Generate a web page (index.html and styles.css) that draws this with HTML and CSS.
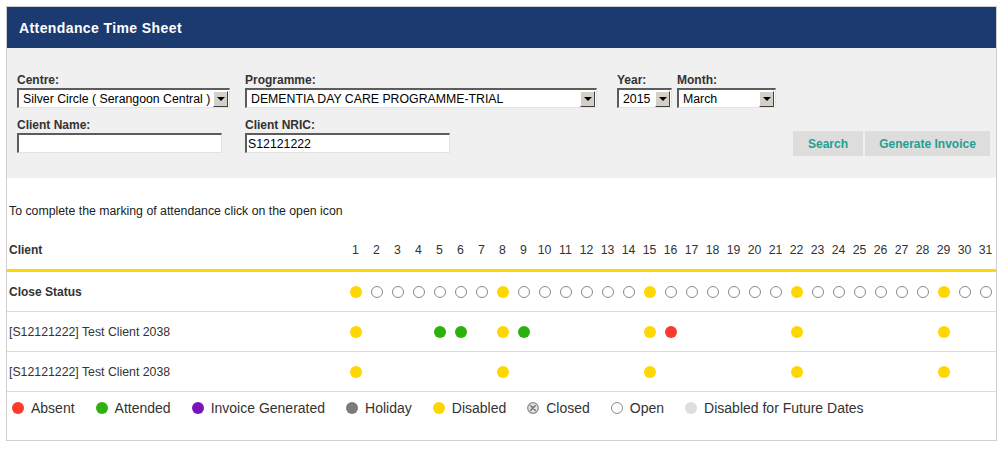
FILE: index.html
```html
<!DOCTYPE html>
<html>
<head>
<meta charset="utf-8">
<title>Attendance Time Sheet</title>
<link rel="stylesheet" href="styles.css">
</head>
<body>
<div class="sheet">
  <div class="title">Attendance Time Sheet</div>
  <div class="filters">
    <div class="frow">
      <div class="field f-centre">
        <label>Centre:</label>
        <div class="select"><span class="val">Silver Circle ( Serangoon Central )</span><span class="btn"><i class="tri"></i></span></div>
      </div>
      <div class="field f-prog">
        <label>Programme:</label>
        <div class="select"><span class="val">DEMENTIA DAY CARE PROGRAMME-TRIAL</span><span class="btn"><i class="tri"></i></span></div>
      </div>
      <div class="field f-year">
        <label>Year:</label>
        <div class="select"><span class="val">2015</span><span class="btn"><i class="tri"></i></span></div>
      </div>
      <div class="field f-month">
        <label>Month:</label>
        <div class="select"><span class="val">March</span><span class="btn"><i class="tri"></i></span></div>
      </div>
    </div>
    <div class="frow">
      <div class="field f-name">
        <label>Client Name:</label>
        <div class="input"></div>
      </div>
      <div class="field f-nric">
        <label>Client NRIC:</label>
        <div class="input">S12121222</div>
      </div>
      <div class="actions">
        <button class="b-search">Search</button>
        <button class="b-invoice">Generate Invoice</button>
      </div>
    </div>
  </div>
  <div class="board">
    <div class="hint">To complete the marking of attendance click on the open icon</div>
    <div class="row head">
      <div class="cl">Client</div>
      <div class="d">1</div><div class="d">2</div><div class="d">3</div><div class="d">4</div><div class="d">5</div><div class="d">6</div><div class="d">7</div><div class="d">8</div><div class="d">9</div><div class="d">10</div><div class="d">11</div><div class="d">12</div><div class="d">13</div><div class="d">14</div><div class="d">15</div><div class="d">16</div><div class="d">17</div><div class="d">18</div><div class="d">19</div><div class="d">20</div><div class="d">21</div><div class="d">22</div><div class="d">23</div><div class="d">24</div><div class="d">25</div><div class="d">26</div><div class="d">27</div><div class="d">28</div><div class="d">29</div><div class="d">30</div><div class="d">31</div>
    </div>
    <div class="row">
      <div class="cl bold">Close Status</div>
      <div class="d"><span class="dot y"></span></div>
      <div class="d"><span class="dot o"></span></div>
      <div class="d"><span class="dot o"></span></div>
      <div class="d"><span class="dot o"></span></div>
      <div class="d"><span class="dot o"></span></div>
      <div class="d"><span class="dot o"></span></div>
      <div class="d"><span class="dot o"></span></div>
      <div class="d"><span class="dot y"></span></div>
      <div class="d"><span class="dot o"></span></div>
      <div class="d"><span class="dot o"></span></div>
      <div class="d"><span class="dot o"></span></div>
      <div class="d"><span class="dot o"></span></div>
      <div class="d"><span class="dot o"></span></div>
      <div class="d"><span class="dot o"></span></div>
      <div class="d"><span class="dot y"></span></div>
      <div class="d"><span class="dot o"></span></div>
      <div class="d"><span class="dot o"></span></div>
      <div class="d"><span class="dot o"></span></div>
      <div class="d"><span class="dot o"></span></div>
      <div class="d"><span class="dot o"></span></div>
      <div class="d"><span class="dot o"></span></div>
      <div class="d"><span class="dot y"></span></div>
      <div class="d"><span class="dot o"></span></div>
      <div class="d"><span class="dot o"></span></div>
      <div class="d"><span class="dot o"></span></div>
      <div class="d"><span class="dot o"></span></div>
      <div class="d"><span class="dot o"></span></div>
      <div class="d"><span class="dot o"></span></div>
      <div class="d"><span class="dot y"></span></div>
      <div class="d"><span class="dot o"></span></div>
      <div class="d"><span class="dot o"></span></div>
    </div>
    <div class="row">
      <div class="cl">[S12121222] Test Client 2038</div>
      <div class="d"><span class="dot y"></span></div>
      <div class="d"></div>
      <div class="d"></div>
      <div class="d"></div>
      <div class="d"><span class="dot g"></span></div>
      <div class="d"><span class="dot g"></span></div>
      <div class="d"></div>
      <div class="d"><span class="dot y"></span></div>
      <div class="d"><span class="dot g"></span></div>
      <div class="d"></div>
      <div class="d"></div>
      <div class="d"></div>
      <div class="d"></div>
      <div class="d"></div>
      <div class="d"><span class="dot y"></span></div>
      <div class="d"><span class="dot r"></span></div>
      <div class="d"></div>
      <div class="d"></div>
      <div class="d"></div>
      <div class="d"></div>
      <div class="d"></div>
      <div class="d"><span class="dot y"></span></div>
      <div class="d"></div>
      <div class="d"></div>
      <div class="d"></div>
      <div class="d"></div>
      <div class="d"></div>
      <div class="d"></div>
      <div class="d"><span class="dot y"></span></div>
      <div class="d"></div>
      <div class="d"></div>
    </div>
    <div class="row">
      <div class="cl">[S12121222] Test Client 2038</div>
      <div class="d"><span class="dot y"></span></div>
      <div class="d"></div>
      <div class="d"></div>
      <div class="d"></div>
      <div class="d"></div>
      <div class="d"></div>
      <div class="d"></div>
      <div class="d"><span class="dot y"></span></div>
      <div class="d"></div>
      <div class="d"></div>
      <div class="d"></div>
      <div class="d"></div>
      <div class="d"></div>
      <div class="d"></div>
      <div class="d"><span class="dot y"></span></div>
      <div class="d"></div>
      <div class="d"></div>
      <div class="d"></div>
      <div class="d"></div>
      <div class="d"></div>
      <div class="d"></div>
      <div class="d"><span class="dot y"></span></div>
      <div class="d"></div>
      <div class="d"></div>
      <div class="d"></div>
      <div class="d"></div>
      <div class="d"></div>
      <div class="d"></div>
      <div class="d"><span class="dot y"></span></div>
      <div class="d"></div>
      <div class="d"></div>
    </div>
    <div class="legend">
      <span class="li"><span class="dot r"></span>Absent</span>
      <span class="li"><span class="dot g"></span>Attended</span>
      <span class="li"><span class="dot p"></span>Invoice Generated</span>
      <span class="li"><span class="dot h"></span>Holiday</span>
      <span class="li"><span class="dot y"></span>Disabled</span>
      <span class="li"><svg class="ico" width="12" height="12" viewBox="0 0 12 12"><circle cx="6" cy="6" r="5.3" fill="#e2e2e2" stroke="#8a8a8a" stroke-width="1.2"/><path d="M3.8 3.8 L8.2 8.2 M8.2 3.8 L3.8 8.2" stroke="#6e6e6e" stroke-width="1.5" stroke-linecap="round"/></svg>Closed</span>
      <span class="li"><span class="dot ol"></span>Open</span>
      <span class="li"><span class="dot f"></span>Disabled for Future Dates</span>
    </div>
  </div>
</div>
</body>
</html>
```

FILE: styles.css
```css
* {
  box-sizing: border-box;
}

body {
  margin: 0;
  background: #fff;
  font-family: "Liberation Sans", Arial, sans-serif;
  color: #333;
}

.sheet {
  margin: 6px;
  width: 991px;
  border: 1px solid #cfcfcf;
}

.title {
  height: 41px;
  background: #1b3a6f;
  color: #fff;
  font-size: 14px;
  font-weight: bold;
  letter-spacing: 0.4px;
  padding-left: 12px;
  display: flex;
  align-items: center;
}

.filters {
  background: #f0f0f0;
  height: 130px;
  padding: 25px 6px 0 10px;
}

.frow {
  display: flex;
}

.frow + .frow {
  margin-top: 10px;
}

.field label {
  display: block;
  font-size: 12px;
  font-weight: bold;
  line-height: 15px;
  color: #333;
}

.f-centre { width: 213px; margin-right: 15px; }
.f-prog { width: 352px; margin-right: 20px; }
.f-year { width: 55px; margin-right: 5px; }
.f-month { width: 99px; }
.f-name { width: 213px; margin-right: 15px; }
.f-nric { width: 352px; }

.select,
.input {
  height: 20px;
  background: #fff;
  border-style: solid;
  border-width: 2px 1px 1px 2px;
  border-color: #5c5c5c #e2e2e2 #e2e2e2 #5c5c5c;
  font-size: 12.3px;
  color: #000;
  display: flex;
  align-items: center;
}

.select {
  padding-left: 4px;
}

.input {
  width: 205px;
  padding-left: 1px;
}

.select .val {
  flex: 1;
  white-space: nowrap;
  overflow: hidden;
}

.select .btn {
  width: 15px;
  height: 16px;
  margin-right: 1px;
  background: #d4d0c8;
  border: 1px solid;
  border-color: #fff #404040 #404040 #fff;
  display: flex;
  align-items: center;
  justify-content: center;
}

.tri {
  width: 0;
  height: 0;
  border-left: 4px solid transparent;
  border-right: 4px solid transparent;
  border-top: 4px solid #000;
  margin-top: 1px;
}

.actions {
  margin-left: auto;
  margin-top: 13px;
  display: flex;
  gap: 2px;
}

.actions button {
  height: 25px;
  border: none;
  background: #dddddd;
  color: #1fa090;
  font-family: "Liberation Sans", Arial, sans-serif;
  font-size: 12px;
  font-weight: bold;
  padding: 0;
}

.b-search { width: 70px; }
.b-invoice { width: 125px; }

.board {
  padding-top: 25px;
}

.hint {
  font-size: 12.3px;
  line-height: 16px;
  padding-left: 2px;
  margin-bottom: 10px;
  color: #222;
}

.row {
  display: grid;
  grid-template-columns: 338px repeat(31, 21px);
  align-items: center;
  height: 40px;
  border-bottom: 1px solid #dcdcdc;
  font-size: 12.3px;
  color: #333;
}

.row.head {
  height: 43px;
  padding-top: 1px;
  border-bottom: 3px solid #ffd700;
}

.cl {
  padding-left: 2px;
}

.head .cl,
.bold {
  font-weight: bold;
  font-size: 12px;
}

.d {
  display: flex;
  justify-content: center;
}

.dot {
  display: inline-block;
  width: 12px;
  height: 12px;
  border-radius: 50%;
  flex: none;
}

.dot.y { background: #ffd700; }
.dot.g { background: #2eb10d; }
.dot.r { background: #fb3a2c; }
.dot.p { background: #7b14b8; }
.dot.h { background: #7b7b7b; }
.dot.f { background: #dedede; }
.dot.o { border: 1.5px solid #8a8a8a; background: #fff; }
.dot.ol { border: 1px solid #8a8a8a; background: #fff; }

.legend {
  display: flex;
  align-items: flex-start;
  height: 48px;
  padding: 8px 0 0 5px;
  font-size: 14px;
  line-height: 16px;
  color: #333;
}

.li {
  display: flex;
  align-items: center;
  margin-right: 21px;
}

.li .dot,
.li .ico {
  margin-right: 7px;
}
```
